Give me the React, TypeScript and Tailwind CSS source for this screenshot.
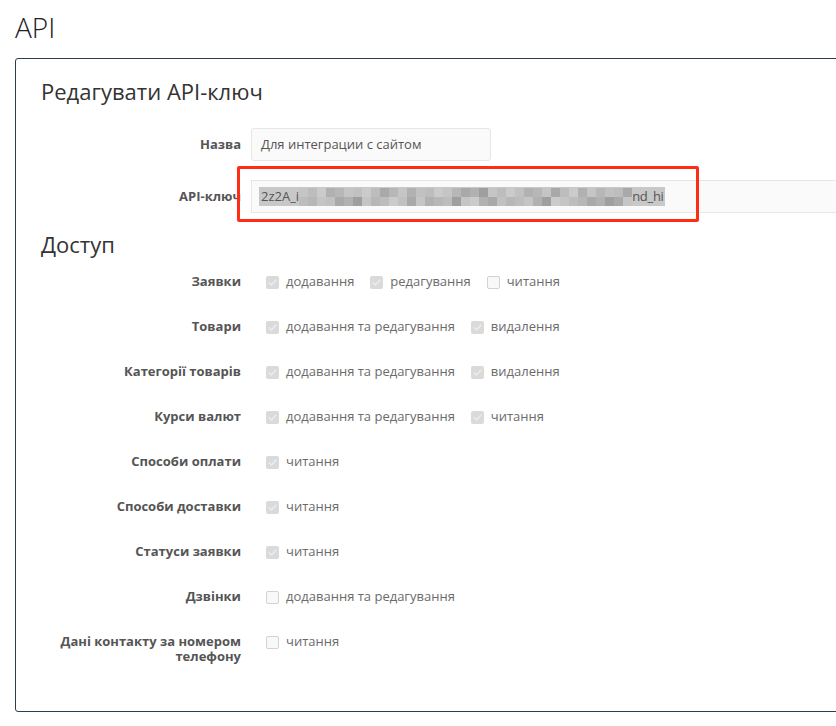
import React from 'react';

const shades = [
  'bg-[#bdbdbd]',
  'bg-[#b1b1b1]',
  'bg-[#c5c5c5]',
  'bg-[#a9a9a9]',
  'bg-[#cbcbcb]',
  'bg-[#b7b7b7]',
  'bg-[#9f9f9f]',
  'bg-[#c1c1c1]',
];

// pixelated part of the key (two rows of blocks)
const topRow = [2, 0, 4, 1, 5, 2, 7, 4, 0, 3, 5, 2, 1, 7, 0, 4, 2, 5, 3, 1, 6, 2, 0, 4, 7, 1, 5, 2, 3, 0, 4, 1, 2, 5, 7, 0, 3];
const bottomRow = [0, 5, 2, 7, 3, 1, 6, 2, 5, 0, 4, 7, 3, 2, 1, 5, 0, 6, 2, 4, 1, 3, 7, 5, 0, 2, 1, 6, 4, 2, 0, 5, 3, 1, 6, 3, 2];

type Opt = { label: string; checked: boolean };
type Row = { title: React.ReactNode; options: Opt[] };

const rows: Row[] = [
  {
    title: 'Заявки',
    options: [
      { label: 'додавання', checked: true },
      { label: 'редагування', checked: true },
      { label: 'читання', checked: false },
    ],
  },
  {
    title: 'Товари',
    options: [
      { label: 'додавання та редагування', checked: true },
      { label: 'видалення', checked: true },
    ],
  },
  {
    title: 'Категорії товарів',
    options: [
      { label: 'додавання та редагування', checked: true },
      { label: 'видалення', checked: true },
    ],
  },
  {
    title: 'Курси валют',
    options: [
      { label: 'додавання та редагування', checked: true },
      { label: 'читання', checked: true },
    ],
  },
  { title: 'Способи оплати', options: [{ label: 'читання', checked: true }] },
  { title: 'Способи доставки', options: [{ label: 'читання', checked: true }] },
  { title: 'Статуси заявки', options: [{ label: 'читання', checked: true }] },
  { title: 'Дзвінки', options: [{ label: 'додавання та редагування', checked: false }] },
  {
    title: (
      <>
        Дані контакту за номером
        <br />
        телефону
      </>
    ),
    options: [{ label: 'читання', checked: false }],
  },
];

const Checkbox = ({ checked }: { checked: boolean }) =>
  checked ? (
    <span className="w-[13px] h-[13px] rounded-[2px] bg-[#dadada] flex items-center justify-center shrink-0">
      <svg width="13" height="13" viewBox="0 0 13 13">
        <path d="M3.2 6.8 L5.4 9 L9.8 4.2" fill="none" stroke="#ececec" strokeWidth="1.6" strokeLinecap="round" strokeLinejoin="round" />
      </svg>
    </span>
  ) : (
    <span className="w-[13px] h-[13px] rounded-[2px] bg-[#f8f8f8] border border-[#d2d2d2] shrink-0" />
  );

export default function App() {
  return (
    <div className="w-[836px] h-[726px] overflow-hidden bg-white font-['Open_Sans',sans-serif] text-[#333]">
      <h1 className="pl-[15px] pt-[10px] text-[28px] leading-[34px] font-light text-[#222]">API</h1>

      <div className="mt-[14px] ml-[15px] w-[900px] h-[654px] border border-[#2c3e50] rounded-[3px] pl-[25px] pt-[19px]">
        <h2 className="text-[22px] leading-[26px] text-[#333]">Редагувати API-ключ</h2>

        {/* name */}
        <div className="mt-[24px] flex items-center">
          <div className="w-[200px] text-right text-[13px] font-bold text-[#555]">Назва</div>
          <div className="ml-[10px] w-[240px] h-[33px] border border-[#e6e6e6] bg-[#fafafa] rounded-[3px] pl-[9px] flex items-center text-[13px] text-[#555]">
            Для интеграции с сайтом
          </div>
        </div>

        {/* api key */}
        <div className="relative mt-[19px] flex items-center">
          <div className="w-[200px] text-right text-[13px] font-bold text-[#555]">API-ключ</div>
          <div className="ml-[10px] flex-1 h-[33px] border border-[#e6e6e6] border-r-0 bg-[#fafafa] pl-[7px] flex items-center text-[13px] text-[#555]">
            <span className="flex items-center h-[19px] bg-[#c8c8c8] pl-[2px]">
              <span>2z2A_i</span>
              <span className="flex flex-col">
                <span className="flex">
                  {topRow.map((s, i) => (
                    <span key={i} className={`w-[9px] h-[9px] ${shades[s]}`} />
                  ))}
                </span>
                <span className="flex">
                  {bottomRow.map((s, i) => (
                    <span key={i} className={`w-[9px] h-[9px] ${shades[s]}`} />
                  ))}
                </span>
              </span>
              <span className="pr-[1px] tracking-[-0.3px]">nd_hi</span>
            </span>
          </div>
          {/* highlight annotation */}
          <div className="absolute left-[196px] top-[-14px] w-[462px] h-[56px] border-[3px] border-[#ff2d14] rounded-[2px]" />
        </div>

        <h2 className="mt-[18px] text-[22px] leading-[26px] text-[#333]">Доступ</h2>

        <div className="mt-[15px] flex flex-col gap-[25px]">
          {rows.map((row, i) => (
            <div key={i} className="flex items-start">
              <div className="w-[200px] pt-[2px] text-right text-[13px] leading-[15px] font-bold text-[#555]">
                {row.title}
              </div>
              <div className="ml-[25px] h-[20px] flex items-center gap-[16px]">
                {row.options.map((o, j) => (
                  <label key={j} className="flex items-center gap-[7px] text-[13px] text-[#6b6b6b]">
                    <Checkbox checked={o.checked} />
                    {o.label}
                  </label>
                ))}
              </div>
            </div>
          ))}
        </div>
      </div>
    </div>
  );
}
